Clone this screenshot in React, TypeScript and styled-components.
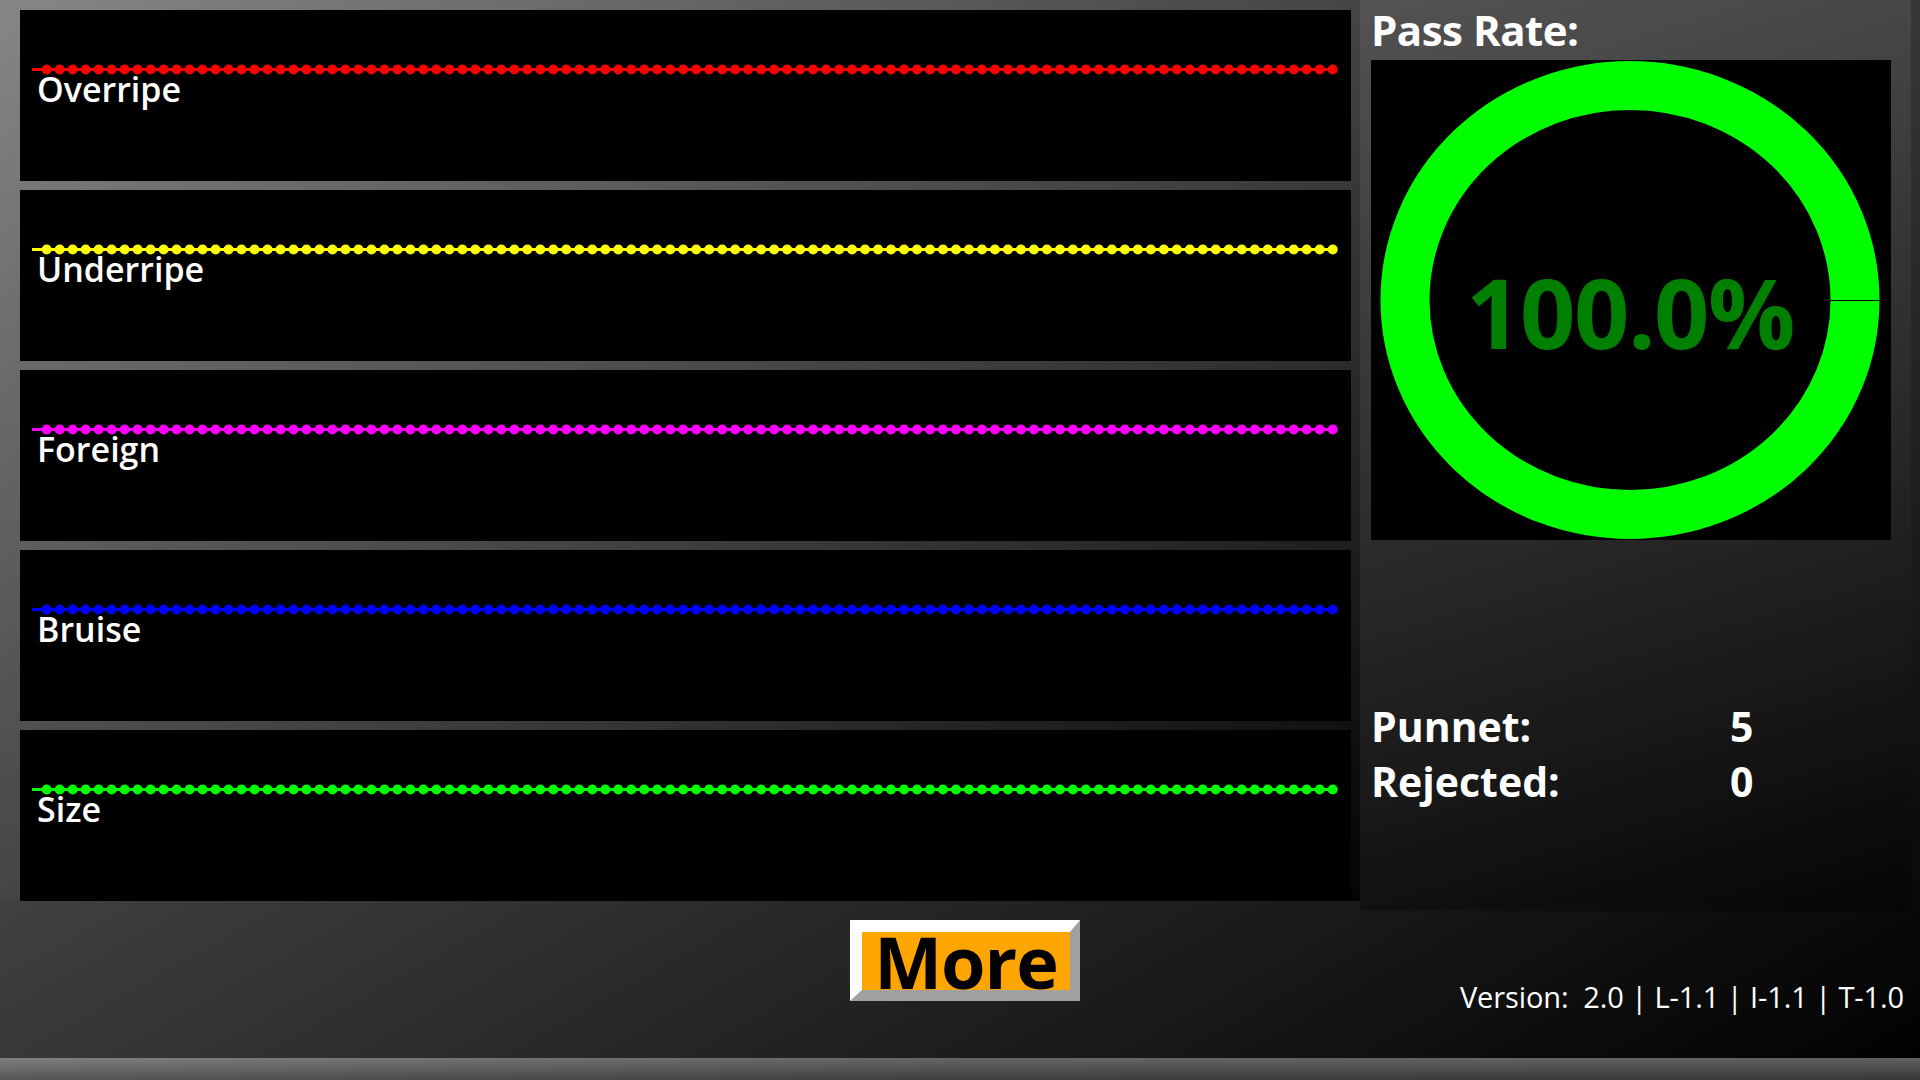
import React from "react";
import styled, { createGlobalStyle } from "styled-components";

const GlobalStyle = createGlobalStyle`
  html, body { margin: 0; padding: 0; }
  body {
    width: 1920px;
    height: 1080px;
    overflow: hidden;
    background: linear-gradient(to bottom right, #6e6e6e, #000000);
    font-family: "Open Sans", "Noto Sans", sans-serif;
  }
`;

const Screen = styled.div`
  width: 1920px;
  height: 1080px;
  display: grid;
  grid-template-rows: 911px 147px 22px;
`;

const TopRow = styled.div`
  display: flex;
  align-items: flex-start;
`;

const DefectColumn = styled.div`
  width: 1360px;
  height: 901px;
  box-sizing: border-box;
  padding: 10px 9px 0 20px;
  display: flex;
  flex-direction: column;
  gap: 9px;
  background: linear-gradient(to bottom right, #868686, #040404);
`;

const DefectPanel = styled.section`
  height: 171px;
  background: #000;
  display: flex;
  flex-direction: column;
  overflow: hidden;
`;

const Trend = styled.svg`
  display: block;
  width: 1331px;
  height: 65px;
  flex: none;
`;

const DefectLabel = styled.div`
  margin: -3px 0 0 17px;
  color: #fff;
  font-size: 34px;
  font-weight: 600;
  line-height: 34px;
`;

const SummaryPanel = styled.aside`
  width: 551px;
  height: 911px;
  box-sizing: border-box;
  padding-left: 11px;
  display: flex;
  flex-direction: column;
  background: linear-gradient(163deg, #535353, #050505);
`;

const Heading = styled.h2`
  margin: 0;
  color: #fff;
  font-size: 42px;
  font-weight: 700;
  line-height: 60px;
  letter-spacing: -0.5px;
`;

const Gauge = styled.div`
  width: 520px;
  height: 480px;
  background: #000;
  display: grid;
  & > * {
    grid-area: 1 / 1;
  }
`;

const GaugeRing = styled.svg`
  display: block;
  width: 520px;
  height: 480px;
`;

const GaugeValue = styled.div`
  margin-top: 203px;
  width: 518px;
  text-align: center;
  align-self: start;
  color: #008000;
  font-size: 97px;
  font-weight: 700;
  line-height: 96px;
  letter-spacing: -1.5px;
`;

const Stats = styled.div`
  margin-top: 159px;
  display: grid;
  grid-template-columns: 359px auto;
  color: #fff;
  font-size: 41px;
  font-weight: 700;
  line-height: 55px;
`;

const StatLabel = styled.div``;

const StatValue = styled.div``;

const BottomArea = styled.footer`
  display: grid;
  grid-template-columns: 1fr auto 1fr;
  align-items: start;
`;

const MoreButton = styled.button`
  grid-column: 2;
  margin: 9px 0 0 10px;
  width: 230px;
  height: 81px;
  box-sizing: border-box;
  padding: 0;
  border-style: solid;
  border-width: 12px 10px 11px 12px;
  border-color: #ffffff #a0a0a0 #a0a0a0 #ffffff;
  background: #ffa500;
  color: #000;
  font-family: "Open Sans", "Noto Sans", sans-serif;
  font-size: 72px;
  font-weight: 700;
  line-height: 58px;
  letter-spacing: -1px;
  cursor: pointer;
`;

const Version = styled.div`
  grid-column: 3;
  justify-self: end;
  margin: 71px 16px 0 0;
  color: #fff;
  font-size: 29px;
  font-weight: 400;
  line-height: 29px;
  white-space: pre;
  letter-spacing: -0.1px;
`;

const TaskBar = styled.div`
  background: linear-gradient(to bottom, rgba(255, 255, 255, 0.14), rgba(0, 0, 0, 0.2)),
    linear-gradient(to right, #6a6a6a, #4c4c4c 50%, #454545);
`;

const defects = [
  { name: "Overripe", color: "#ff0000" },
  { name: "Underripe", color: "#ffff00" },
  { name: "Foreign", color: "#ff00ff" },
  { name: "Bruise", color: "#0000ff" },
  { name: "Size", color: "#00ff00" },
];

const dotXs = Array.from({ length: 100 }, (_, i) => 26.7 + i * 12.99);

function TrendLine({ color }: { color: string }) {
  return (
    <Trend viewBox="0 0 1331 65">
      <line x1={12} y1={59.5} x2={1313} y2={59.5} stroke={color} strokeWidth={3} />
      {dotXs.map((x, i) => (
        <circle key={i} cx={x} cy={59.5} r={5} fill={color} />
      ))}
    </Trend>
  );
}

export default function App() {
  return (
    <>
      <GlobalStyle />
      <Screen>
        <TopRow>
          <DefectColumn>
            {defects.map((d) => (
              <DefectPanel key={d.name}>
                <TrendLine color={d.color} />
                <DefectLabel>{d.name}</DefectLabel>
              </DefectPanel>
            ))}
          </DefectColumn>
          <SummaryPanel>
            <Heading>Pass Rate:</Heading>
            <Gauge>
              <GaugeRing viewBox="0 0 520 480">
                <ellipse cx={259} cy={240} rx={225} ry={214.5} fill="none" stroke="#00ff00" strokeWidth={49} />
                <line x1={458} y1={240.5} x2={510} y2={240.5} stroke="#000" strokeWidth={1} />
              </GaugeRing>
              <GaugeValue>100.0%</GaugeValue>
            </Gauge>
            <Stats>
              <StatLabel>Punnet:</StatLabel>
              <StatValue>5</StatValue>
              <StatLabel>Rejected:</StatLabel>
              <StatValue>0</StatValue>
            </Stats>
          </SummaryPanel>
        </TopRow>
        <BottomArea>
          <MoreButton>More</MoreButton>
          <Version>{"Version:  2.0 | L-1.1 | I-1.1 | T-1.0"}</Version>
        </BottomArea>
        <TaskBar />
      </Screen>
    </>
  );
}
